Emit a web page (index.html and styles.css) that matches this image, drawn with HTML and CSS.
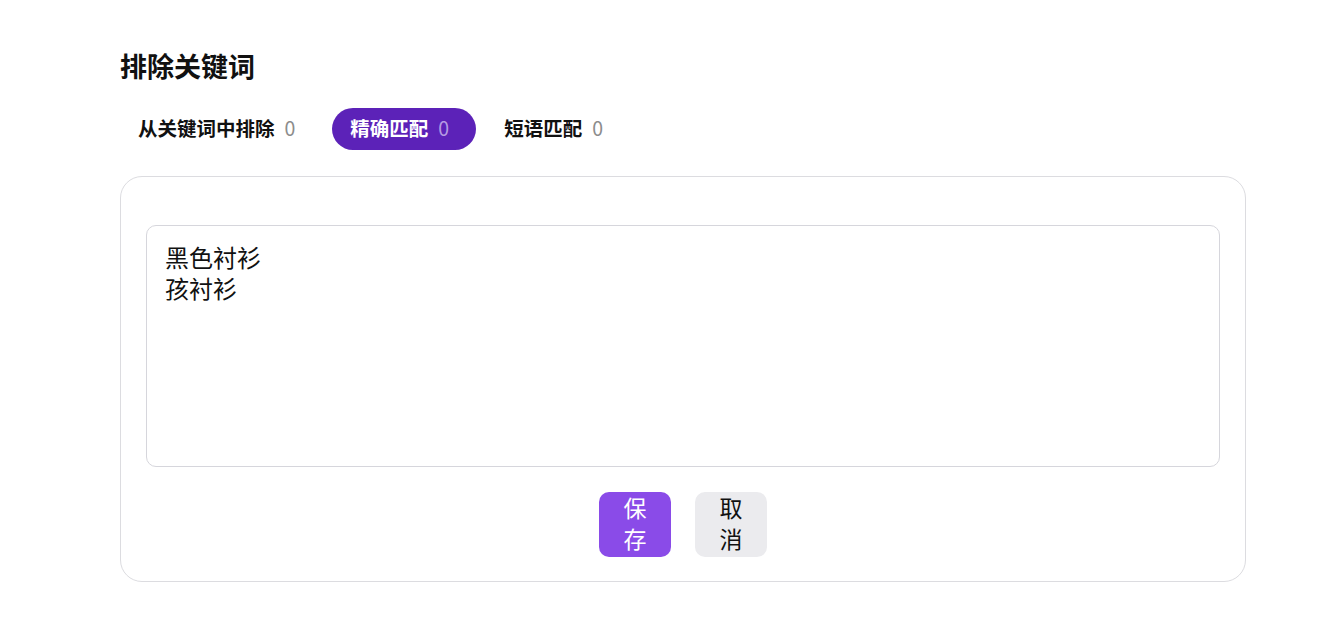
FILE: index.html
```html
<!DOCTYPE html>
<html lang="zh-CN">
<head>
    <meta charset="UTF-8">
    <meta name="viewport" content="width=device-width, initial-scale=1.0">
    <title>排除关键词</title>
    <link rel="stylesheet" href="styles.css">
</head>
<body>
    <main class="page">
        <h1 class="page-title">排除关键词</h1>
        <nav class="tabs">
            <button class="tab">从关键词中排除<span class="count">0</span></button>
            <button class="tab active">精确匹配<span class="count">0</span></button>
            <button class="tab">短语匹配<span class="count">0</span></button>
        </nav>
        <section class="card">
            <textarea class="keywords">黑色衬衫
孩衬衫</textarea>
            <div class="actions">
                <button class="btn btn-save">保存</button>
                <button class="btn btn-cancel">取消</button>
            </div>
        </section>
    </main>
</body>
</html>
```

FILE: styles.css
```css
body {
    margin: 0;
    padding: 0;
    background-color: #fff;
    color: #111;
    font-family: "Noto Sans CJK SC", "Noto Sans", sans-serif;
}
.page {
    padding: 47px 98px 0 120px;
}
.page-title {
    margin: 0;
    font-size: 27px;
    font-weight: 700;
    line-height: 38px;
}
.tabs {
    display: flex;
    gap: 10px;
    margin-top: 23px;
}
.tab {
    display: flex;
    align-items: center;
    box-sizing: border-box;
    height: 42px;
    padding: 0 27px 3px 18px;
    border: none;
    border-radius: 21px;
    background: none;
    color: #111;
    font-family: inherit;
    font-size: 19.5px;
    font-weight: 700;
    cursor: pointer;
}
.tab .count {
    margin-left: 10px;
    color: #8c8c8c;
    font-weight: 400;
}
.tab.active {
    background-color: #5c22b8;
    color: #fff;
}
.tab.active .count {
    color: #b59be3;
}
.card {
    margin-top: 26px;
    padding: 48px 25px 24px;
    border: 1px solid #dcdce0;
    border-radius: 22px;
}
.keywords {
    display: block;
    box-sizing: border-box;
    width: 100%;
    height: 242px;
    padding: 15px 18px;
    border: 1px solid #d6d6dc;
    border-radius: 10px;
    color: #111;
    font-family: inherit;
    font-size: 24px;
    line-height: 31px;
    resize: none;
    outline: none;
}
.actions {
    display: flex;
    justify-content: center;
    gap: 24px;
    margin-top: 25px;
}
.btn {
    box-sizing: border-box;
    width: 72px;
    height: 65px;
    padding: 0 16px 6px;
    border: none;
    border-radius: 10px;
    font-family: inherit;
    font-size: 23px;
    line-height: 31px;
    cursor: pointer;
}
.btn-save {
    background-color: #8a4be8;
    color: #fff;
}
.btn-cancel {
    background-color: #ebebee;
    color: #111;
}
```
